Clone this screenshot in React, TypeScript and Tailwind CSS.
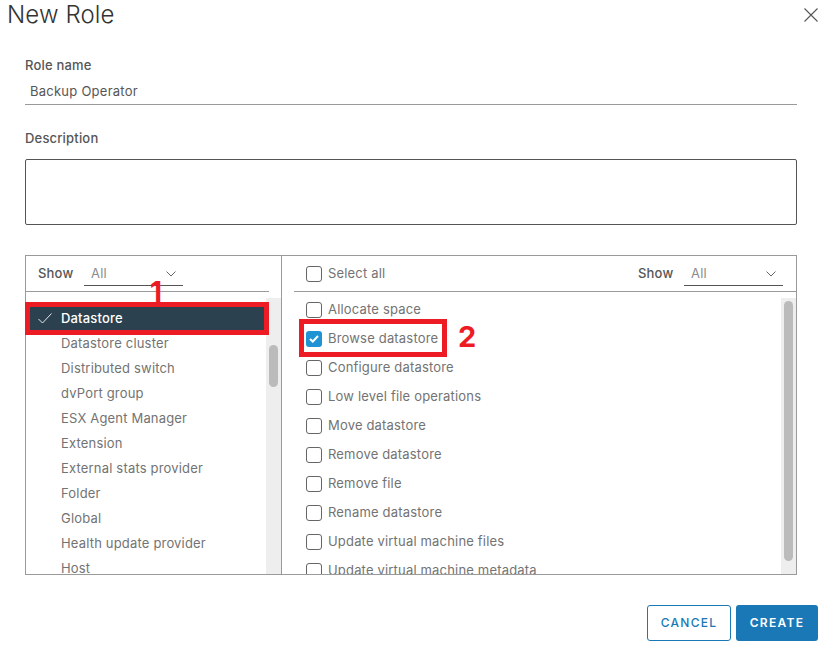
import React from "react";

const leftItems = ["Datastore cluster", "Distributed switch", "dvPort group", "ESX Agent Manager", "Extension", "External stats provider", "Folder", "Global", "Health update provider", "Host"];
const rightItems = ["Allocate space", "Browse datastore", "Configure datastore", "Low level file operations", "Move datastore", "Remove datastore", "Remove file", "Rename datastore", "Update virtual machine files", "Update virtual machine metadata"];

function Chevron() {
  return (
    <svg width="10" height="6" viewBox="0 0 10 6" fill="none" stroke="#666" strokeWidth="1">
      <path d="M0.5 0.5 L5 5 L9.5 0.5" />
    </svg>
  );
}

function Select() {
  return (
    <div className="flex h-[24px] w-[99px] items-center justify-between border-b border-[#555] pl-[7px] pr-[7px] pt-[2px] text-[13px] text-[#8c8c8c]">
      <span>All</span>
      <Chevron />
    </div>
  );
}

function Box({ checked }: { checked?: boolean }) {
  return checked ? (
    <span className="flex h-[16px] w-[16px] shrink-0 items-center justify-center rounded-[3px] bg-[#1f93d3]">
      <svg width="10" height="8" viewBox="0 0 10 8" fill="none" stroke="white" strokeWidth="2">
        <path d="M1 4 L3.8 6.5 L9 1" />
      </svg>
    </span>
  ) : (
    <span className="h-[16px] w-[16px] shrink-0 rounded-[3px] border border-[#666] bg-white" />
  );
}

export default function App() {
  return (
    <div className="relative h-[649px] w-[825px] overflow-hidden bg-white text-[13px] tracking-[0.18px] text-[#666]" style={{ fontFamily: 'Inter, "Open Sans", sans-serif' }}>
      <div className="flex h-[30px] items-center justify-between pl-[7px] pr-[7px]">
        <h1 className="text-[24px] font-light leading-[30px] tracking-[0.1px] text-[#333]">New Role</h1>
        <svg width="14" height="14" viewBox="0 0 14 14" fill="none" stroke="#555" strokeWidth="1.1">
          <path d="M0.5 0.5 L13.5 13.5 M13.5 0.5 L0.5 13.5" />
        </svg>
      </div>

      <div className="ml-[25px] flex w-[772px] flex-col pt-[26px]">
        <label className="h-[18px] text-[13px] font-medium leading-[18px] text-[#565656]">Role name</label>
        <div className="mt-[8px] h-[23px] border-b border-[#9a9a9a] pl-[5px] text-[13px] leading-[18px] tracking-[0.25px] text-[#565656]">Backup Operator</div>
        <label className="mt-[24px] h-[18px] text-[13px] font-medium leading-[18px] text-[#565656]">Description</label>
        <div className="mt-[12px] h-[66px] rounded-[2px] border border-[#555]" />

        <div className="mt-[30px] flex h-[320px] border border-[#9a9a9a]">
          <div className="flex h-full w-[256px] shrink-0 flex-col overflow-hidden border-r border-[#9a9a9a]">
            <div className="flex h-[36px] w-[243px] shrink-0 items-center border-b border-[#9a9a9a] pl-[12px]">
              <span className="w-[46px] font-medium text-[#565656]">Show</span>
              <Select />
            </div>
            <div className="flex min-h-0 flex-1">
              <div className="flex w-[240px] flex-col overflow-hidden pt-[14px]">
                <div className="flex h-[25px] shrink-0 items-center bg-[#2c4150] pl-[12px] font-medium text-white">
                  <svg width="14" height="11" viewBox="0 0 14 11" fill="none" stroke="#e8e8e8" strokeWidth="1" className="mr-[9px]">
                    <path d="M0.5 6 L4.5 10 L13.5 0.5" />
                  </svg>
                  Datastore
                </div>
                {leftItems.map((t) => (
                  <div key={t} className="flex h-[25px] shrink-0 items-center whitespace-nowrap pl-[35px] text-[#737373]">{t}</div>
                ))}
              </div>
              <div className="mt-[6px] w-[15px] bg-[#eeeeee] pl-[3px] pt-[47px]">
                <div className="h-[42px] w-[9px] rounded-[5px] bg-[#bbbbbb]" />
              </div>
            </div>
          </div>

          <div className="flex min-w-0 flex-1 flex-col overflow-hidden pl-[12px]">
            <div className="flex h-[36px] shrink-0 items-center border-b border-[#9a9a9a] pl-[12px]">
              <Box />
              <span className="ml-[6px] text-[#737373]">Select all</span>
              <span className="ml-auto w-[46px] font-medium text-[#565656]">Show</span>
              <Select />
              <span className="w-[13px]" />
            </div>
            <div className="flex min-h-0 flex-1">
              <div className="flex flex-1 flex-col overflow-hidden pt-[3px]">
                {rightItems.map((t, i) => (
                  <div key={t} className="flex h-[29px] shrink-0 items-center gap-[6px] whitespace-nowrap pl-[12px] text-[#737373]">
                    <Box checked={i === 1} />
                    <span>{t}</span>
                  </div>
                ))}
              </div>
              <div className="mt-[6px] w-[15px] bg-[#eeeeee] pl-[3px] pt-[3px]">
                <div className="h-[260px] w-[9px] rounded-[5px] bg-[#bbbbbb]" />
              </div>
            </div>
          </div>
        </div>
      </div>

      <div className="mt-[30px] flex justify-end gap-[5px] pr-[7px]">
        <button className="h-[36px] w-[84px] rounded-[3px] border border-[#1a78b6] bg-white text-[12px] font-medium tracking-[1.3px] text-[#1a78b6]">CANCEL</button>
        <button className="h-[36px] w-[82px] rounded-[3px] bg-[#1a78b6] text-[12px] font-semibold tracking-[1.3px] text-white">CREATE</button>
      </div>

      <div className="absolute left-[25px] top-[302px] h-[33px] w-[244px] border-[5px] border-[#ed1c24]" />
      <div className="absolute left-[299px] top-[319px] h-[38px] w-[148px] border-[5px] border-[#ed1c24]" />
      <span className="absolute left-[150px] top-[276px] text-[28px] font-bold leading-[32px] text-[#ed1c24]">1</span>
      <span className="absolute left-[458px] top-[321px] text-[29px] font-bold leading-[32px] text-[#ed1c24]">2</span>
    </div>
  );
}
